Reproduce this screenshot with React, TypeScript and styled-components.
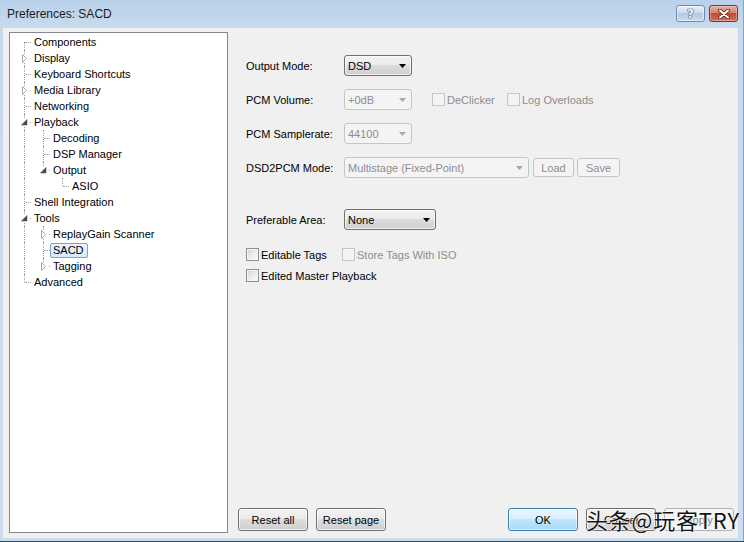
import styled, { createGlobalStyle, css } from "styled-components";

const UI_FONT = `"Liberation Sans", Arial, sans-serif`;

const GlobalStyle = createGlobalStyle`
  html, body {
    margin: 0;
    padding: 0;
    background: #cddcee;
  }
  body {
    font-family: ${UI_FONT};
    font-size: 11px;
    color: #000;
  }
`;

type TreeItem = {
  label: string;
  collapsed?: boolean;
  selected?: boolean;
  children?: TreeItem[];
};

type Line = "none" | "full" | "top" | "bottom";

interface FlatRow {
  item: TreeItem;
  guides: boolean[];
  line: Line;
}

const TREE: TreeItem[] = [
  { label: "Components" },
  { label: "Display", collapsed: true },
  { label: "Keyboard Shortcuts" },
  { label: "Media Library", collapsed: true },
  { label: "Networking" },
  {
    label: "Playback",
    children: [
      { label: "Decoding" },
      { label: "DSP Manager" },
      { label: "Output", children: [{ label: "ASIO" }] },
    ],
  },
  { label: "Shell Integration" },
  {
    label: "Tools",
    children: [
      { label: "ReplayGain Scanner", collapsed: true },
      { label: "SACD", selected: true },
      { label: "Tagging", collapsed: true },
    ],
  },
  { label: "Advanced" },
];

function flatten(
  items: TreeItem[],
  guides: boolean[],
  root: boolean,
  out: FlatRow[]
): FlatRow[] {
  items.forEach((item, i) => {
    const last = i === items.length - 1;
    let line: Line = last ? "top" : "full";
    if (root && i === 0) line = last ? "none" : "bottom";
    out.push({ item, guides, line });
    if (item.children) flatten(item.children, [...guides, !last], false, out);
  });
  return out;
}

const Window = styled.div`
  width: 744px;
  height: 542px;
  box-sizing: border-box;
  display: flex;
  flex-direction: column;
  background: linear-gradient(to bottom, #b9d1ea 0px, #c8daee 28px, #cddcee 100%);
  box-shadow: inset 0 -1px 0 #2c4a5e, inset -1px 0 0 #8aa3bf;
  overflow: hidden;
`;

const TitleBar = styled.div`
  height: 28px;
  flex: none;
  display: flex;
  align-items: flex-start;
  padding: 0 6px 0 7px;
`;

const Title = styled.span`
  font-family: ${UI_FONT};
  font-size: 12px;
  line-height: 28px;
  color: #1b1b1b;
`;

const CaptionButtons = styled.div`
  margin-left: auto;
  margin-top: 5px;
  display: flex;
  gap: 4px;
`;

const CaptionButton = styled.div<{ $close?: boolean }>`
  box-sizing: border-box;
  width: 29px;
  height: 17px;
  border-radius: 3px;
  display: flex;
  align-items: center;
  justify-content: center;
  ${(p) =>
    p.$close
      ? css`
          border: 1px solid #7b3426;
          background: linear-gradient(to bottom, #e9ad9f 0%, #d8806c 45%, #c4472f 50%, #d3715a 100%);
          box-shadow: inset 0 0 0 1px rgba(255, 220, 210, 0.45);
        `
      : css`
          border: 1px solid #7189ab;
          background: linear-gradient(to bottom, #e6eef8 0%, #cddcee 45%, #b5c9e2 50%, #c9daef 100%);
          box-shadow: inset 0 0 0 1px rgba(255, 255, 255, 0.5);
        `}
`;

const HelpGlyph = styled.span`
  font-family: "DejaVu Sans", sans-serif;
  font-weight: bold;
  font-size: 12px;
  line-height: 12px;
  color: #f2f6fb;
  text-shadow: 0 0 1px #32465f, 0 0 1px #32465f, 0 0 1px #32465f;
`;

const Body = styled.div`
  flex: 1;
  display: flex;
  margin: 0 6px 4px 3px;
  padding: 4px 4px 5px 6px;
  background: #f0f0f0;
`;

const TreePanel = styled.div`
  width: 219px;
  flex: none;
  box-sizing: border-box;
  border: 1px solid #828790;
  background: #fff;
  padding-top: 1px;
`;

const TreeRow = styled.div`
  display: flex;
  align-items: center;
  height: 16px;
  padding-left: 5px;
  line-height: 16px;
  white-space: nowrap;
`;

const dotted = "1px dotted #a0a0a0";

const Guide = styled.span<{ $pipe: boolean }>`
  position: relative;
  flex: none;
  width: 19px;
  height: 16px;
  ${(p) =>
    p.$pipe &&
    css`
      &::before {
        content: "";
        position: absolute;
        left: 9px;
        top: 0;
        bottom: 0;
        border-left: ${dotted};
      }
    `}
`;

const Connector = styled.span<{ $line: Line }>`
  position: relative;
  flex: none;
  width: 16px;
  height: 16px;
  &::before {
    content: "";
    position: absolute;
    left: 9px;
    border-left: ${dotted};
    display: ${(p) => (p.$line === "none" ? "none" : "block")};
    top: ${(p) => (p.$line === "bottom" ? "8px" : "0")};
    bottom: ${(p) => (p.$line === "top" ? "8px" : "0")};
  }
  &::after {
    content: "";
    position: absolute;
    left: 10px;
    right: 0;
    top: 8px;
    border-top: ${dotted};
  }
`;

const Expander = styled.svg`
  position: absolute;
  left: 5px;
  top: 4px;
  z-index: 1;
`;

const NodeLabel = styled.span<{ $selected?: boolean }>`
  box-sizing: border-box;
  height: 15px;
  line-height: 13px;
  padding: 0 3px 0 2px;
  border: 1px solid transparent;
  border-radius: 2px;
  ${(p) =>
    p.$selected &&
    css`
      border-color: #7da2ce;
      background: linear-gradient(to bottom, #ebf4fd, #d7e8fc);
    `}
`;

const RightColumn = styled.div`
  flex: 1;
  margin-left: 10px;
  display: flex;
  flex-direction: column;
`;

const Form = styled.div`
  flex: 1;
  padding: 23px 0 0 8px;
  display: flex;
  flex-direction: column;
`;

const Row = styled.div<{ $gap?: number; $h?: number }>`
  display: flex;
  align-items: center;
  height: ${(p) => p.$h ?? 21}px;
  margin-top: ${(p) => p.$gap ?? 0}px;
`;

const FieldLabel = styled.span`
  width: 98px;
  flex: none;
`;

const Combo = styled.div<{ $w: number; $disabled?: boolean }>`
  box-sizing: border-box;
  width: ${(p) => p.$w}px;
  height: 21px;
  flex: none;
  display: flex;
  align-items: center;
  padding: 0 5px 0 3px;
  border-radius: 3px;
  ${(p) =>
    p.$disabled
      ? css`
          border: 1px solid #c3c6c9;
          background: #f4f4f4;
          color: #8d8d8d;
        `
      : css`
          border: 1px solid #707070;
          background: linear-gradient(to bottom, #f2f2f2 0%, #ebebeb 49%, #dddddd 50%, #cfcfcf 100%);
          box-shadow: inset 0 0 0 1px rgba(255, 255, 255, 0.7);
          color: #000;
        `}
  svg {
    margin-left: auto;
  }
`;

const SmallButton = styled.div<{ $w: number; $ml: number }>`
  box-sizing: border-box;
  width: ${(p) => p.$w}px;
  height: 19px;
  margin-left: ${(p) => p.$ml}px;
  border: 1px solid #c3c6c9;
  border-radius: 3px;
  background: #f4f4f4;
  color: #8d8d8d;
  display: flex;
  align-items: center;
  justify-content: center;
`;

const CheckItem = styled.label<{ $w?: number; $ml?: number; $disabled?: boolean }>`
  display: flex;
  align-items: center;
  gap: 2px;
  flex: none;
  width: ${(p) => (p.$w ? `${p.$w}px` : "auto")};
  margin-left: ${(p) => p.$ml ?? 0}px;
  color: ${(p) => (p.$disabled ? "#8d8d8d" : "#000")};
`;

const Box = styled.span<{ $disabled?: boolean }>`
  box-sizing: border-box;
  width: 13px;
  height: 13px;
  flex: none;
  ${(p) =>
    p.$disabled
      ? css`
          border: 1px solid #c5c5c5;
          background: #f4f4f4;
        `
      : css`
          border: 1px solid #8e8f8f;
          background: linear-gradient(135deg, #cfd3d8 0%, #eceeef 55%, #fbfbfb 100%);
          box-shadow: inset 0 0 0 1px #f4f4f4;
        `}
`;

const ButtonRow = styled.div`
  position: relative;
  display: flex;
  align-items: center;
  height: 23px;
  margin-bottom: 2px;
`;

type ButtonVariant = "normal" | "focused" | "disabled";

const PushButton = styled.div<{ $variant?: ButtonVariant; $ml?: number }>`
  box-sizing: border-box;
  width: 70px;
  height: 23px;
  margin-left: ${(p) => p.$ml ?? 0}px;
  border-radius: 3px;
  display: flex;
  align-items: center;
  justify-content: center;
  ${(p) => {
    if (p.$variant === "focused")
      return css`
        border: 1px solid #3c7fb1;
        background: linear-gradient(to bottom, #eaf6fd 0%, #d9f0fc 49%, #bee6fd 50%, #a7d9f5 100%);
        box-shadow: inset 0 0 0 1px rgba(255, 255, 255, 0.6);
      `;
    if (p.$variant === "disabled")
      return css`
        border: 1px solid #adb2b5;
        background: #f4f4f4;
        color: #838383;
      `;
    return css`
      border: 1px solid #707070;
      background: linear-gradient(to bottom, #f2f2f2 0%, #ebebeb 49%, #dddddd 50%, #cfcfcf 100%);
      box-shadow: inset 0 0 0 1px rgba(255, 255, 255, 0.7);
    `;
  }}
`;

const Spacer = styled.div`
  flex: 1;
`;

const Watermark = styled.div`
  position: absolute;
  right: -6px;
  top: -3px;
  line-height: 28px;
  font-family: "Noto Sans CJK SC", "Noto Sans", sans-serif;
  font-size: 22px;
  letter-spacing: 0.8px;
  color: #141414;
  text-shadow: 0 0 2px #fff, 0 0 2px #fff, 0 0 1px #fff;
  white-space: nowrap;
  pointer-events: none;
`;

const Arrow = ({ disabled }: { disabled?: boolean }) => (
  <svg width="7" height="4" viewBox="0 0 7 4">
    <polygon points="0,0 7,0 3.5,4" fill={disabled ? "#a8a8a8" : "#000"} />
  </svg>
);

const CloseGlyph = () => (
  <svg width="12" height="10" viewBox="0 0 12 10">
    <path d="M2 1.5 L10 8.5 M10 1.5 L2 8.5" stroke="#4a1a10" strokeWidth="3.6" strokeLinecap="round" />
    <path d="M2 1.5 L10 8.5 M10 1.5 L2 8.5" stroke="#fff" strokeWidth="2" strokeLinecap="round" />
  </svg>
);

const ExpanderIcon = ({ open }: { open: boolean }) => (
  <Expander width="9" height="9" viewBox="0 0 9 9">
    <rect x="0" y="0" width="9" height="9" fill="#fff" />
    {open ? (
      <polygon points="7,1.5 7,7 1.5,7" fill="#464646" stroke="#5a5a5a" strokeWidth="0.6" />
    ) : (
      <polygon points="2.5,0.5 6.5,4.5 2.5,8.5" fill="#fff" stroke="#a6a6a6" strokeWidth="1" />
    )}
  </Expander>
);

const Check = ({
  label,
  disabled,
  w,
  ml,
}: {
  label: string;
  disabled?: boolean;
  w?: number;
  ml?: number;
}) => (
  <CheckItem $w={w} $ml={ml} $disabled={disabled}>
    <Box $disabled={disabled} />
    <span>{label}</span>
  </CheckItem>
);

const App = () => {
  const rows = flatten(TREE, [], true, []);

  return (
    <>
      <GlobalStyle />
      <Window>
        <TitleBar>
          <Title>Preferences: SACD</Title>
          <CaptionButtons>
            <CaptionButton>
              <HelpGlyph>?</HelpGlyph>
            </CaptionButton>
            <CaptionButton $close>
              <CloseGlyph />
            </CaptionButton>
          </CaptionButtons>
        </TitleBar>

        <Body>
          <TreePanel>
            {rows.map((row) => (
              <TreeRow key={row.item.label}>
                {row.guides.map((pipe, i) => (
                  <Guide key={i} $pipe={pipe} />
                ))}
                <Connector $line={row.line}>
                  {row.item.children && <ExpanderIcon open />}
                  {row.item.collapsed && <ExpanderIcon open={false} />}
                </Connector>
                <NodeLabel $selected={row.item.selected}>{row.item.label}</NodeLabel>
              </TreeRow>
            ))}
          </TreePanel>

          <RightColumn>
            <Form>
              <Row>
                <FieldLabel>Output Mode:</FieldLabel>
                <Combo $w={68}>
                  DSD
                  <Arrow />
                </Combo>
              </Row>
              <Row $gap={13}>
                <FieldLabel>PCM Volume:</FieldLabel>
                <Combo $w={68} $disabled>
                  +0dB
                  <Arrow disabled />
                </Combo>
                <Check label="DeClicker" disabled w={75} ml={20} />
                <Check label="Log Overloads" disabled />
              </Row>
              <Row $gap={13}>
                <FieldLabel>PCM Samplerate:</FieldLabel>
                <Combo $w={68} $disabled>
                  44100
                  <Arrow disabled />
                </Combo>
              </Row>
              <Row $gap={13}>
                <FieldLabel>DSD2PCM Mode:</FieldLabel>
                <Combo $w={185} $disabled>
                  Multistage (Fixed-Point)
                  <Arrow disabled />
                </Combo>
                <SmallButton $w={41} $ml={4}>Load</SmallButton>
                <SmallButton $w={43} $ml={3}>Save</SmallButton>
              </Row>
              <Row $gap={31}>
                <FieldLabel>Preferable Area:</FieldLabel>
                <Combo $w={92}>
                  None
                  <Arrow />
                </Combo>
              </Row>
              <Row $gap={16} $h={17}>
                <Check label="Editable Tags" w={96} />
                <Check label="Store Tags With ISO" disabled />
              </Row>
              <Row $gap={4} $h={17}>
                <Check label="Edited Master Playback" />
              </Row>
            </Form>

            <ButtonRow>
              <PushButton>Reset all</PushButton>
              <PushButton $ml={8}>Reset page</PushButton>
              <Spacer />
              <PushButton $variant="focused">OK</PushButton>
              <PushButton $ml={8}>Cancel</PushButton>
              <PushButton $ml={8} $variant="disabled">
                Apply
              </PushButton>
              <Watermark>头条@玩客TRY</Watermark>
            </ButtonRow>
          </RightColumn>
        </Body>
      </Window>
    </>
  );
};

export default App;
